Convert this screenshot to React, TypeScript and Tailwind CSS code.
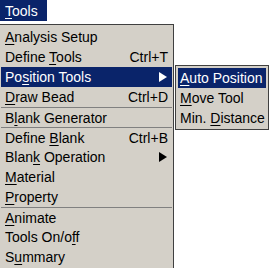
const mainItems = [
  { label: "Analysis Setup", u: 0 },
  { label: "Define Tools", u: 7, shortcut: "Ctrl+T" },
  { label: "Position Tools", u: 2, arrow: true, active: true },
  { label: "Draw Bead", u: 0, shortcut: "Ctrl+D" },
  { label: "Blank Generator", u: 1, sep: true },
  { label: "Define Blank", u: 7, shortcut: "Ctrl+B", sep: true },
  { label: "Blank Operation", u: 4, arrow: true },
  { label: "Material", u: 0 },
  { label: "Property", u: 0 },
  { label: "Animate", u: 0, sep: true },
  { label: "Tools On/off", u: 10 },
  { label: "Summary", u: 1 },
];

const subItems = [
  { label: "Auto Position", u: 0, active: true },
  { label: "Move Tool", u: 0 },
  { label: "Min. Distance", u: 5 },
];

const Label = ({ text, u }: { text: string; u: number }) => (
  <span className="whitespace-nowrap">
    {text.slice(0, u)}
    <span className="underline underline-offset-[2px]">{text[u]}</span>
    {text.slice(u + 1)}
  </span>
);

const Arrow = ({ white }: { white?: boolean }) => (
  <svg width="8" height="10" viewBox="0 0 8 10" className="mr-[1px]">
    <polygon points="0,0 8,5 0,10" fill={white ? "#ffffff" : "#000000"} />
  </svg>
);

export default function App() {
  return (
    <div
      className="relative w-[270px] h-[268px] bg-white overflow-hidden text-[14px] leading-none text-black"
      style={{ fontFamily: '"Liberation Sans", Arial, sans-serif' }}
    >
      <div className="flex h-[21px]">
        <div className="w-[47px] bg-[#0a246a] text-white flex items-center pl-[5px]">
          <Label text="Tools" u={0} />
        </div>
      </div>

      <div className="absolute left-0 top-[24px] w-[174px] h-[246px] bg-[#d4d0c8] border-t border-t-[#404040] border-r border-r-[#404040] pt-[2px] pl-[1px] pr-[1px]">
        {mainItems.map((it) => (
          <div
            key={it.label}
            className={`h-[20px] flex items-center justify-between pl-[4px] pr-[4px] ${
              it.sep ? "border-t border-t-[#808080]" : ""
            } ${it.active ? "bg-[#0a246a] text-white" : ""}`}
          >
            <Label text={it.label} u={it.u} />
            {it.shortcut && <span>{it.shortcut}</span>}
            {it.arrow && <Arrow white={it.active} />}
          </div>
        ))}
      </div>

      <div className="absolute left-[175px] top-[65px] w-[94px] h-[65px] bg-[#d4d0c8] border border-[#404040] p-[2px]">
        {subItems.map((it) => (
          <div
            key={it.label}
            className={`h-[20px] flex items-center pl-[2px] ${
              it.active ? "bg-[#0a246a] text-white" : ""
            }`}
          >
            <Label text={it.label} u={it.u} />
          </div>
        ))}
      </div>
    </div>
  );
}
